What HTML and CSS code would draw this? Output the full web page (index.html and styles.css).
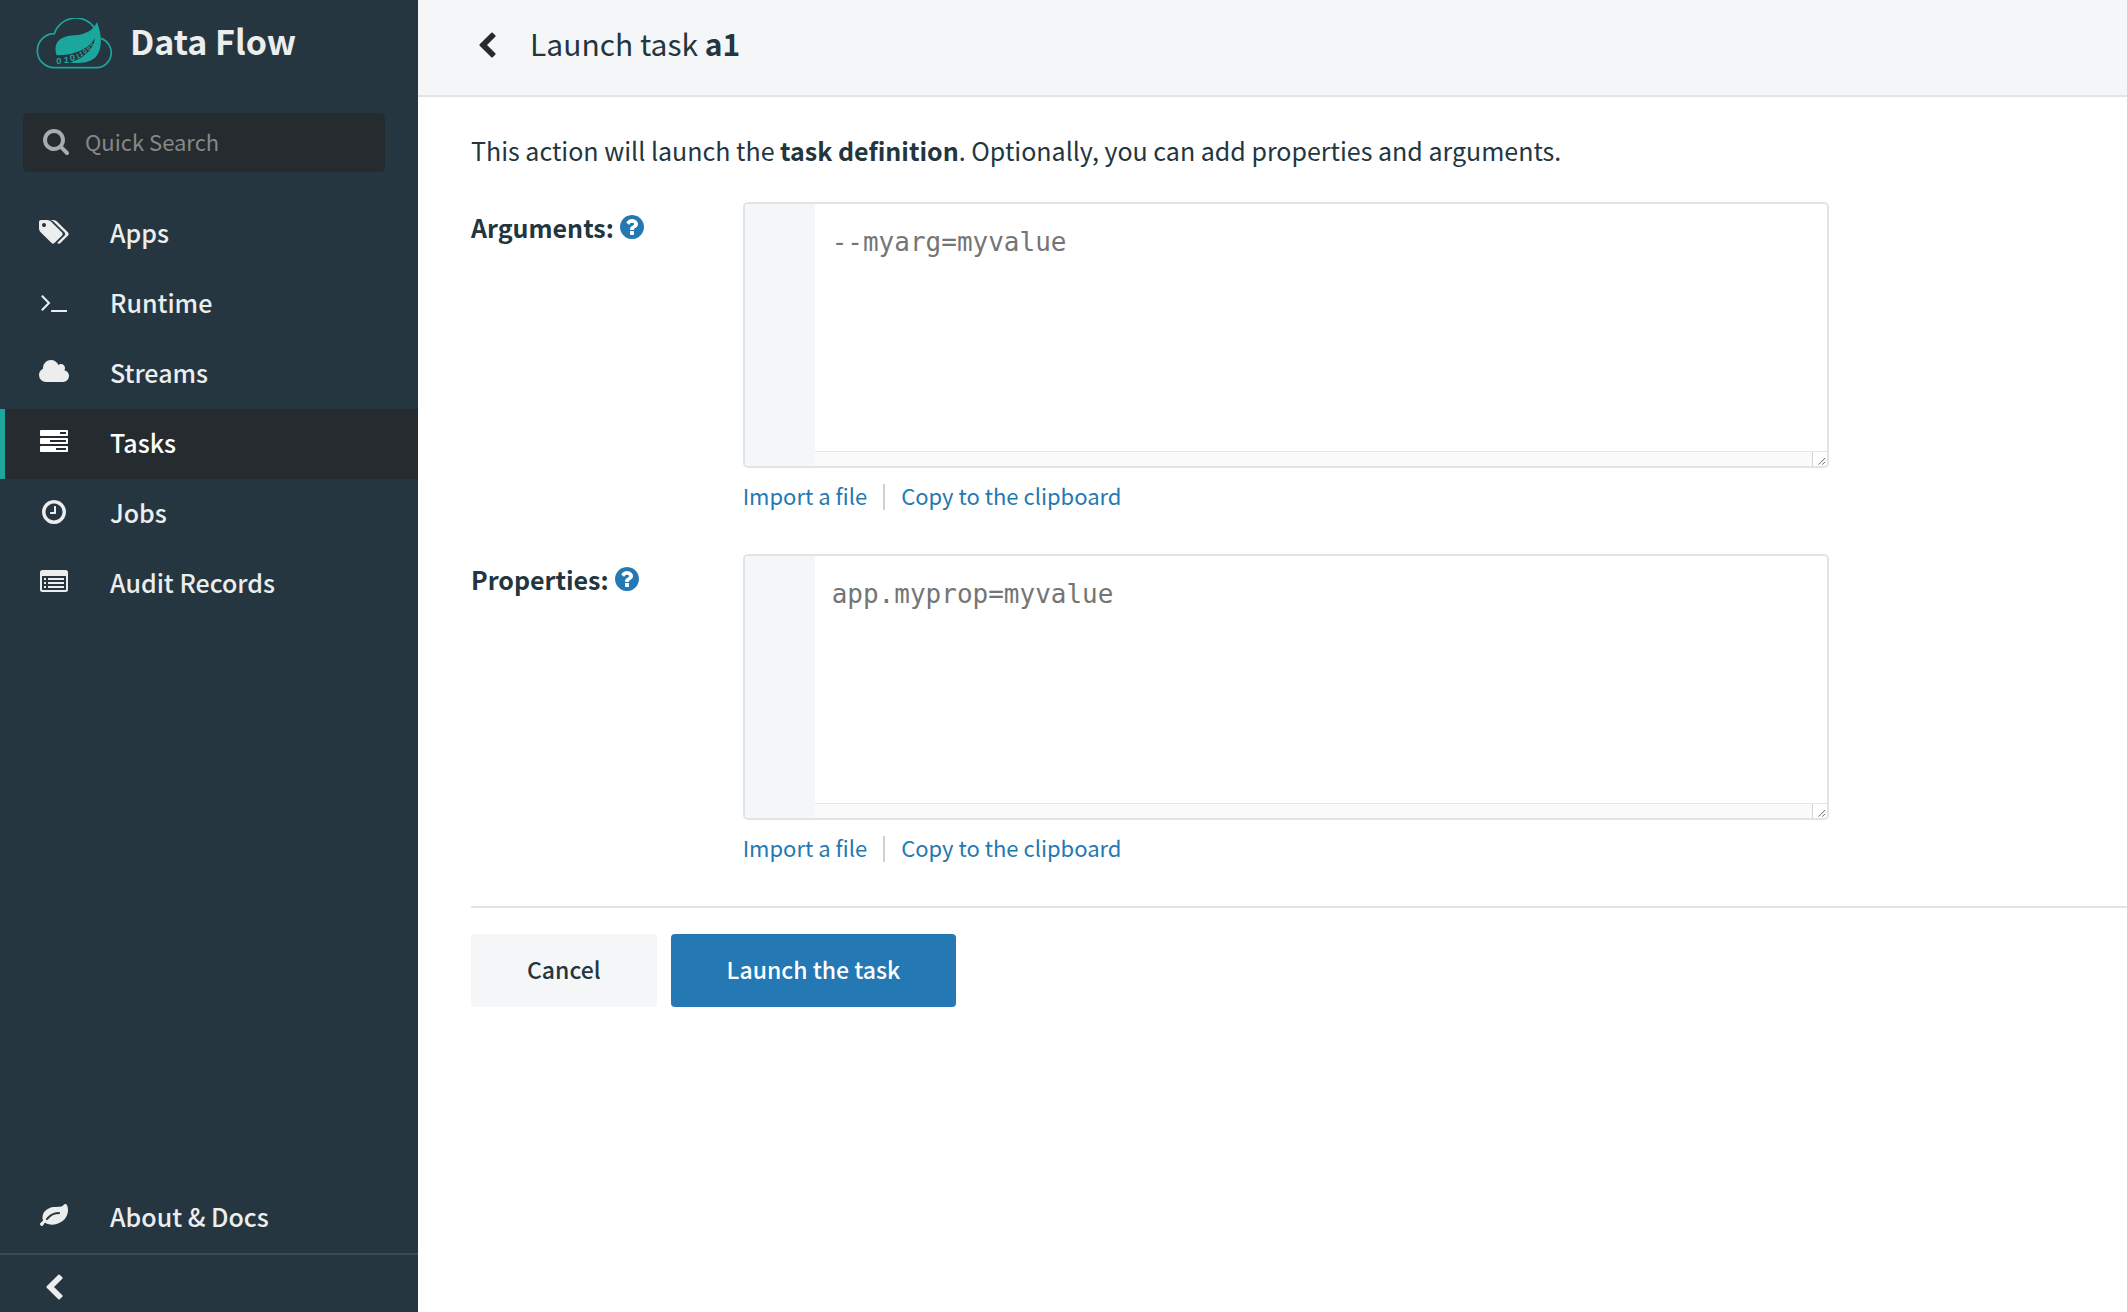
FILE: index.html
```html
<!DOCTYPE html>
<html lang="en">
<head>
<meta charset="utf-8">
<meta name="viewport" content="width=device-width, initial-scale=1">
<title>Data Flow - Launch task a1</title>
<link rel="stylesheet" href="styles.css">
</head>
<body>
<svg class="sprite" aria-hidden="true">
  <symbol id="chevron" viewBox="0 0 1792 1792"><path d="M1427 301l-531 531 531 531q19 19 19 45t-19 45l-166 166q-19 19-45 19t-45-19l-742-742q-19-19-19-45t19-45l742-742q19-19 45-19t45 19l166 166q19 19 19 45t-19 45z"/></symbol>
  <symbol id="help" viewBox="128 128 1536 1536"><path d="M1024 1376v-192q0-14-9-23t-23-9h-192q-14 0-23 9t-9 23v192q0 14 9 23t23 9h192q14 0 23-9t9-23zm256-672q0-88-55.5-163t-138.5-116-170-41q-243 0-371 213-15 24 8 42l132 100q7 6 19 6 16 0 25-12 53-68 86-92 34-24 86-24 48 0 85.5 26t37.5 59q0 38-20 61t-68 45q-63 28-115.5 86.5t-52.5 125.5v36q0 14 9 23t23 9h192q14 0 23-9t9-23q0-19 21.5-49.5t54.5-49.5q32-18 49-28.5t46-35 44.5-48 28-60.5 12.5-81zm384 192q0 209-103 385.5t-279.5 279.5-385.5 103-385.5-103-279.5-279.5-103-385.5 103-385.5 279.5-279.5 385.5-103 385.5 103 279.5 279.5 103 385.5z"/></symbol>
  <symbol id="grip" viewBox="0 0 15 15"><path d="M6 13.500L13 6.500M10 13.500L13 10.500" fill="none" stroke="#555" stroke-width="1"/></symbol>
</svg>
<div class="app">
  <aside class="sidebar">
    <a class="brand" href="#">
      <svg class="logo" viewBox="108 54 228 153" aria-hidden="true">
        <path class="logo-cloud" d="M163 203A51 51 0 0 1 163 101A68 68 0 0 1 284 84M302 115A45 45 0 0 1 290 203H162"/>
        <path d="M291 66C308 110 306 150 288 170C270 189 235 191 210 188C250 176 280 150 285 115C262 148 225 166 170 166C158 128 180 108 222 106C255 104 280 92 291 66Z"/>
        <g class="logo-digits">
          <text x="169" y="192">0</text>
          <text x="191" y="190">1</text>
          <text x="211" y="184" transform="rotate(-8 211 184)">0</text>
          <g class="logo-digits-far">
            <text x="230" y="176" transform="rotate(-18 230 176)">1</text>
            <text x="241" y="170" transform="rotate(-22 241 170)">1</text>
            <text x="253" y="163" transform="rotate(-28 253 163)">0</text>
            <text x="264" y="152" transform="rotate(-38 264 152)">0</text>
            <text x="273" y="140" transform="rotate(-48 273 140)">0</text>
          </g>
        </g>
      </svg>
      <span>Data Flow</span>
    </a>
    <label class="search">
      <svg class="icon" viewBox="0 0 1792 1792" aria-hidden="true"><path d="M1216 832q0-185-131.500-316.500t-316.500-131.500-316.500 131.500-131.500 316.500 131.500 316.500 316.500 131.500 316.500-131.500 131.500-316.500zm512 832q0 52-38 90t-90 38q-54 0-90-38l-343-342q-179 124-399 124-143 0-273.500-55.500t-225-150-150-225-55.500-273.500 55.500-273.500 150-225 225-150 273.500-55.500 273.500 55.500 225 150 150 225 55.500 273.500q0 220-124 399l343 343q37 37 37 90z"/></svg>
      <input type="text" placeholder="Quick Search" aria-label="Quick Search">
    </label>
    <nav class="menu">
      <a class="item" href="#"><svg class="icon icon-wide" viewBox="0 0 1920 1792" aria-hidden="true"><path d="M448 448q0-53-37.500-90.500t-90.500-37.500-90.500 37.500-37.500 90.500 37.500 90.500 90.500 37.500 90.500-37.500 37.500-90.500zm1067 576q0 53-37 90l-491 492q-39 37-91 37-53 0-90-37l-715-716q-38-37-64.500-101t-26.500-117v-416q0-52 38-90t90-38h416q53 0 117 26.500t102 64.500l715 714q37 39 37 91zm384 0q0 53-37 90l-491 492q-39 37-91 37-36 0-59-14t-53-45l470-470q37-37 37-90 0-52-37-91l-715-714q-38-38-102-64.500t-117-26.500h224q53 0 117 26.500t102 64.500l715 714q37 39 37 91z"/></svg>Apps</a>
      <a class="item" href="#"><svg class="icon icon-wide" viewBox="-64 0 1920 1792" aria-hidden="true"><path d="M649 983l-466 466q-10 10-23 10t-23-10l-50-50q-10-10-10-23t10-23l393-393-393-393q-10-10-10-23t10-23l50-50q10-10 23-10t23 10l466 466q10 10 10 23t-10 23zm1079 457v64q0 14-9 23t-23 9h-960q-14 0-23-9t-9-23v-64q0-14 9-23t23-9h960q14 0 23 9t9 23z"/></svg>Runtime</a>
      <a class="item" href="#"><svg class="icon icon-wide" viewBox="0 0 1920 1792" aria-hidden="true"><path d="M1920 1152q0 159-112.500 271.500t-271.500 112.500h-1088q-185 0-316.500-131.500t-131.500-316.500q0-132 71-241.500t187-163.500q-2-28-2-43 0-212 150-362t362-150q158 0 286.500 88t187.500 230q70-62 166-62 106 0 181 75t75 181q0 75-41 138 129 30 213 134.500t84 239.500z"/></svg>Streams</a>
      <a class="item active" href="#" aria-current="page"><svg class="icon icon-wide" viewBox="-64 0 1920 1792" aria-hidden="true"><path d="M1024 1408h640v-128h-640v128zm-384-512h1024v-128h-1024v128zm640-512h384v-128h-384v128zm512 832v256q0 26-19 45t-45 19h-1664q-26 0-45-19t-19-45v-256q0-26 19-45t45-19h1664q26 0 45 19t19 45zm0-512v256q0 26-19 45t-45 19h-1664q-26 0-45-19t-19-45v-256q0-26 19-45t45-19h1664q26 0 45 19t19 45zm0-512v256q0 26-19 45t-45 19h-1664q-26 0-45-19t-19-45v-256q0-26 19-45t45-19h1664q26 0 45 19t19 45z"/></svg>Tasks</a>
      <a class="item" href="#"><svg class="icon icon-wide" viewBox="-64 0 1920 1792" aria-hidden="true"><path d="M1024 544v448q0 14-9 23t-23 9h-320q-14 0-23-9t-9-23v-64q0-14 9-23t23-9h224v-352q0-14 9-23t23-9h64q14 0 23 9t9 23zm416 352q0-148-73-273t-198-198-273-73-273 73-198 198-73 273 73 273 198 198 273 73 273-73 198-198 73-273zm224 0q0 209-103 385.500t-279.500 279.500-385.500 103-385.500-103-279.500-279.500-103-385.500 103-385.500 279.500-279.500 385.500-103 385.500 103 279.500 279.500 103 385.500z"/></svg>Jobs</a>
      <a class="item" href="#"><svg class="icon icon-wide" viewBox="-64 0 1920 1792" aria-hidden="true"><path fill-rule="evenodd" d="M160 128H1632q160 0 160 160V1376q0 160-160 160H160q-160 0-160-160V288q0-160 160-160zM128 512V1376q0 32 32 32H1632q32 0 32-32V512z"/><path d="M256 640h128v128h-128zM512 640h1024v128h-1024zM256 896h128v128h-128zM512 896h1024v128h-1024zM256 1152h128v128h-128zM512 1152h1024v128h-1024z"/></svg>Audit Records</a>
    </nav>
    <div class="sidebar-foot">
      <a class="item" href="#"><svg class="icon icon-wide" viewBox="-64 0 1920 1792" aria-hidden="true"><path d="M1280 704q0-26-19-45t-45-19q-172 0-318 49.500t-259.500 134-235.500 219.500q-19 21-19 45 0 26 19 45t45 19q24 0 45-19 27-24 74-71t67-66q137-124 268.500-176t313.500-52q26 0 45-19t19-45zm512-198q0 95-20 193-46 224-184.500 383t-357.500 268q-214 108-438 108-148 0-286-47-15-5-88-42t-96-37q-16 0-39.500 32t-45 70-52.500 70-60 32q-43 0-63.500-17.500t-45.500-59.500q-2-4-6-11t-5.500-10-3-9.500-1.500-13.500q0-35 31-73.500t68-65.500 68-56 31-48q0-4-14-38t-16-44q-9-51-9-104 0-115 43.500-220t119-184.500 170.500-139 204-95.500q55-18 145-25.500t179.500-9 178.500-6 163.500-24 113.500-56.500l29.500-29.500 29.500-28 27-20 36.500-16 43.500-4.500q39 0 70.500 46t47.500 112 24 124 8 96z"/></svg>About &amp; Docs</a>
      <button class="collapse" type="button" aria-label="Collapse menu"><svg class="icon"><use href="#chevron"/></svg></button>
    </div>
  </aside>
  <main class="page">
    <header class="page-head">
      <a class="back" href="#" aria-label="Back"><svg class="icon"><use href="#chevron"/></svg></a>
      <h1>Launch task <strong>a1</strong></h1>
    </header>
    <form class="content">
      <p class="intro">This action will launch the <strong>task definition</strong>. Optionally, you can add properties and arguments.</p>
      <div class="row">
        <div class="row-label"><label for="arguments">Arguments:</label><svg class="help"><use href="#help"/></svg></div>
        <div class="field">
          <div class="editor">
            <div class="gutter"></div>
            <div class="editor-body">
              <textarea id="arguments" placeholder="--myarg=myvalue" spellcheck="false"></textarea>
              <div class="track"><svg class="grip"><use href="#grip"/></svg></div>
            </div>
          </div>
          <div class="links"><a href="#">Import a file</a><a href="#">Copy to the clipboard</a></div>
        </div>
      </div>
      <div class="row">
        <div class="row-label"><label for="properties">Properties:</label><svg class="help"><use href="#help"/></svg></div>
        <div class="field">
          <div class="editor">
            <div class="gutter"></div>
            <div class="editor-body">
              <textarea id="properties" placeholder="app.myprop=myvalue" spellcheck="false"></textarea>
              <div class="track"><svg class="grip"><use href="#grip"/></svg></div>
            </div>
          </div>
          <div class="links"><a href="#">Import a file</a><a href="#">Copy to the clipboard</a></div>
        </div>
      </div>
      <div class="actions">
        <button class="btn" type="button">Cancel</button>
        <button class="btn btn-primary" type="submit">Launch the task</button>
      </div>
    </form>
  </main>
</div>
</body>
</html>
```
FILE: styles.css
```css
* {
  box-sizing: border-box;
}

body {
  margin: 0;
  background: #fff;
  color: #233640;
  font-family: "Noto Sans CJK SC", "Noto Sans", sans-serif;
  font-size: 25px;
  line-height: 36px;
}

a {
  color: inherit;
  text-decoration: none;
}

button,
input,
textarea {
  font: inherit;
}

.sprite {
  display: none;
}

.app {
  display: flex;
  min-height: 100vh;
}

.icon {
  flex: none;
  width: 28px;
  height: 28px;
  fill: currentColor;
}

.icon-wide {
  width: 30px;
}

/* Sidebar */

.sidebar {
  display: flex;
  flex: none;
  flex-direction: column;
  width: 418px;
  background: #263640;
  color: #eceeee;
}

.brand {
  display: flex;
  align-items: flex-start;
  gap: 18px;
  height: 87px;
  padding: 18px 0 0 36px;
  font-size: 34px;
  font-weight: 700;
  line-height: 46px;
}

.logo {
  width: 76px;
  height: 51px;
  fill: #1ba79d;
}

.logo-cloud {
  fill: none;
  stroke: #1ba79d;
  stroke-width: 5;
}

.logo-digits {
  font-family: "Liberation Sans", sans-serif;
  font-size: 28px;
  font-weight: 700;
}

.logo-digits-far {
  font-size: 20px;
}

.search {
  display: flex;
  align-items: center;
  gap: 15px;
  height: 59px;
  margin: 26px 33px 27px 23px;
  padding: 0 19px 4px;
  border-radius: 5px;
  background: #262b2f;
  color: #a9abac;
}

.search input {
  flex: 1;
  min-width: 0;
  height: 36px;
  padding: 0;
  border: 0;
  outline: 0;
  background: none;
  color: #eceeee;
  font-size: 22px;
}

.search input::placeholder {
  color: #85888a;
}

.item {
  display: flex;
  align-items: center;
  gap: 41px;
  height: 70px;
  padding: 0 0 5px 34px;
  border-left: 5px solid transparent;
  font-weight: 500;
}

.item.active {
  border-left-color: #1ba79d;
  background: #252b2e;
  color: #fff;
}

.sidebar-foot {
  margin-top: auto;
}

.collapse {
  display: flex;
  align-items: center;
  width: 100%;
  height: 59px;
  padding: 8px 0 0 40px;
  border: 0;
  border-top: 2px solid #3e4a50;
  background: none;
  color: inherit;
}

/* Page */

.page {
  flex: 1;
  min-width: 0;
}

.page-head {
  display: flex;
  align-items: center;
  gap: 29px;
  height: 97px;
  padding: 0 53px 4px 55px;
  border-bottom: 2px solid #dfe4e8;
  background: #f4f6f8;
}

.back {
  display: flex;
  color: #252b2e;
}

h1 {
  margin: 0;
  padding-bottom: 5px;
  font-size: 30px;
  font-weight: 400;
}

.content {
  padding: 35px 0 53px 53px;
}

.intro {
  margin: 0 0 34px;
}

.row {
  display: grid;
  grid-template-columns: 2fr 8fr 2fr;
  margin: 0 26px 38px 0;
}

.row-label {
  display: flex;
  align-items: center;
  gap: 6px;
  height: 50px;
  font-weight: 700;
}

.help {
  width: 24px;
  height: 24px;
  fill: #2478b3;
}

.editor {
  display: flex;
  height: 266px;
  overflow: hidden;
  border: 2px solid #dfe4e8;
  border-radius: 5px;
}

.gutter {
  flex: none;
  width: 70px;
  background: #f4f6f8;
}

.editor-body {
  display: flex;
  flex: 1;
  flex-direction: column;
  min-width: 0;
}

textarea {
  display: block;
  flex: 1;
  padding: 20px 17px;
  border: 0;
  outline: 0;
  resize: none;
  background: none;
  color: #233640;
  font-family: "DejaVu Sans Mono", monospace;
  font-size: 26px;
  line-height: 36px;
}

textarea::placeholder {
  color: #757575;
}

.track {
  display: flex;
  justify-content: flex-end;
  height: 15px;
  border-top: 1px solid #e4e6e8;
  background: #fafafa;
}

.grip {
  width: 15px;
  height: 14px;
  border-left: 1px solid #d4d6d8;
  background: #fff;
}

.links {
  display: flex;
  align-items: center;
  height: 36px;
  margin-top: 12px;
  padding-bottom: 2px;
  color: #2478b3;
  font-size: 22px;
  line-height: 22px;
}

.links a {
  padding-bottom: 4px;
}

.links a + a {
  margin-left: 16px;
  padding-left: 16px;
  border-left: 2px solid #ccd0d4;
}

.actions {
  display: flex;
  gap: 14px;
  padding-top: 26px;
  border-top: 2px solid #dfe4e8;
}

.btn {
  height: 73px;
  padding: 0 56px 4px;
  border: 0;
  border-radius: 4px;
  background: #f4f6f8;
  color: #233640;
  font-size: 23px;
  font-weight: 500;
}

.btn-primary {
  background: #2478b3;
  color: #fff;
}
```
